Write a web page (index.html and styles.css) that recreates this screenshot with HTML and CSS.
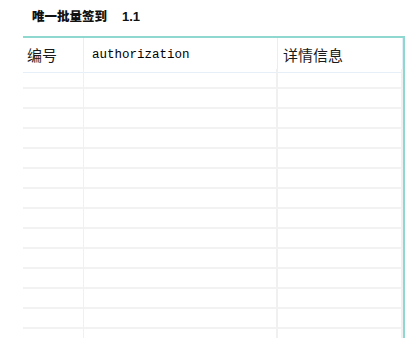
FILE: index.html
```html
<!DOCTYPE html>
<html lang="zh-CN">
<head>
    <meta charset="UTF-8">
    <meta name="viewport" content="width=device-width, initial-scale=1.0">
    <title>唯一批量签到 1.1</title>
    <link rel="stylesheet" href="styles.css">
</head>
<body>
    <div class="title">唯一批量签到<span class="version">1.1</span></div>
    <div class="grid">
        <div class="row head">
            <div class="cell">编号</div>
            <div class="cell mono">authorization</div>
            <div class="cell">详情信息</div>
        </div>
        <div id="rows"></div>
    </div>
    <script>
        const rows = document.getElementById('rows');
        for (let i = 0; i < 14; i++) {
            rows.innerHTML += '<div class="row"><div class="cell"></div><div class="cell"></div><div class="cell"></div></div>';
        }
    </script>
</body>
</html>
```

FILE: styles.css
```css
body {
    margin: 0;
    background: #fff;
    font-family: "Noto Sans CJK SC", "Noto Sans", sans-serif;
    color: #222;
    overflow: hidden;
    height: 338px;
}
.title {
    padding: 6px 0 0 32px;
    height: 28px;
    box-sizing: border-box;
    font-size: 12.5px;
    font-weight: 900;
    color: #111;
}
.version {
    margin-left: 15px;
    font-family: "Liberation Sans", Arial, sans-serif;
    font-size: 13px;
}
.grid {
    margin-left: 23px;
    width: 382px;
    border-top: 2px solid #8ed8d0;
    border-right: 2px solid #8ed8d0;
    box-sizing: border-box;
    margin-top: 8px;
}
.row {
    display: grid;
    grid-template-columns: 61px 194px 1fr;
    height: 20px;
}
.row .cell {
    border-right: 2px solid #f0f0f0;
    border-bottom: 2px solid #f2f2f2;
}
.row .cell:first-child {
    border-right-width: 1px;
}
.head {
    height: 31px;
}
.head .cell {
    border-right: 1px solid #e6eef7;
    border-bottom: 1px solid #e6eef7;
    font-size: 15px;
    line-height: 34px;
    padding-left: 5px;
    color: #1a1a1a;
}
.head .cell:first-child {
    padding-left: 4px;
}
.head .mono {
    font-family: "Courier New", "Liberation Mono", monospace;
    font-size: 12.5px;
    padding-left: 8px;
    color: #000;
}
```
